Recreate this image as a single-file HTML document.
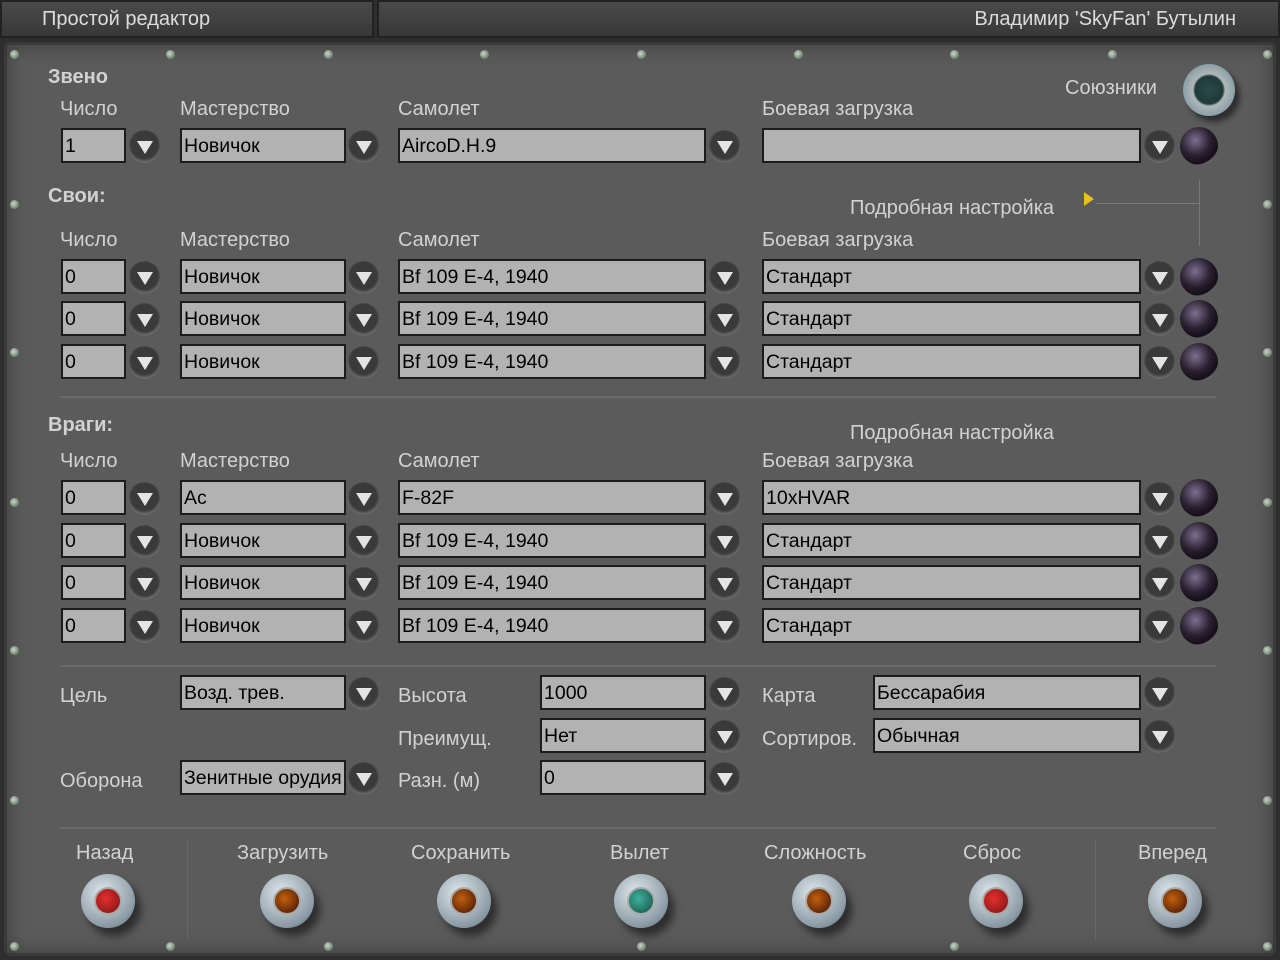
<!DOCTYPE html>
<html><head><meta charset="utf-8"><style>
*{margin:0;padding:0;box-sizing:border-box}
body{width:1280px;height:960px;overflow:hidden;background:#2e2e2e;font-family:"Liberation Sans",sans-serif;position:relative}
.a{position:absolute}
.top{position:absolute;top:0;height:38px;background:linear-gradient(#4a4a4a,#383838);border:2px solid #222;color:#ddd;font-size:20px;line-height:34px}
.panel{position:absolute;left:4px;top:42px;width:1272px;height:914px;background:#5b5b5b;border:3px solid #3a3a3a;border-radius:6px;box-shadow:inset 0 0 20px rgba(0,0,0,.35)}
.l{position:absolute;color:#d2d2d2;font-size:20px;white-space:nowrap}
.b{font-weight:bold}
.f{position:absolute;height:35px;background:#b2b2b2;border:2px solid #1c1c1c;color:#000;font-size:19.5px;line-height:32px;padding-left:2px;white-space:nowrap;overflow:hidden}
.d{position:absolute;width:33px;height:33px;border-radius:50%;background:radial-gradient(circle at 50% 45%,#3a3a3a 55%,#6a6a6a 70%,#2a2a2a 100%)}
.d:after{content:"";position:absolute;left:9px;top:11px;border-left:8px solid transparent;border-right:8px solid transparent;border-top:13px solid #e4e4e4}
.k{position:absolute;width:38px;height:38px;border-radius:50%;background:radial-gradient(circle at 40% 35%,#7a7090 0,#2a2030 45%,#140e18 70%,#9a90a0 78%,#4a4450 100%)}
.s{position:absolute;width:9px;height:9px;border-radius:50%;background:radial-gradient(circle at 40% 40%,#c8d8c8,#4a5a4a)}
.hr{position:absolute;height:2px;background:#666c70}
.btn{position:absolute;width:54px;height:54px;border-radius:50%;background:radial-gradient(circle at 40% 35%,#e0e8ec,#8a9aa4 70%,#50606a 100%);box-shadow:6px 8px 8px rgba(0,0,0,.5)}
.btn i{position:absolute;left:13px;top:13px;width:28px;height:28px;border-radius:50%;border:2px solid #aaa}
</style></head><body>
<div class="top" style="left:0;width:374px;padding-left:40px">Простой редактор</div>
<div class="top" style="left:377px;width:903px;text-align:right;padding-right:42px">Владимир 'SkyFan' Бутылин</div>
<div class="panel"></div>
<div class="s" style="left:10px;top:50px"></div><div class="s" style="left:166px;top:50px"></div><div class="s" style="left:324px;top:50px"></div><div class="s" style="left:480px;top:50px"></div><div class="s" style="left:637px;top:50px"></div><div class="s" style="left:794px;top:50px"></div><div class="s" style="left:950px;top:50px"></div><div class="s" style="left:1108px;top:50px"></div><div class="s" style="left:1263px;top:50px"></div>
<div class="s" style="left:10px;top:942px"></div><div class="s" style="left:166px;top:942px"></div><div class="s" style="left:324px;top:942px"></div><div class="s" style="left:637px;top:942px"></div><div class="s" style="left:950px;top:942px"></div><div class="s" style="left:1263px;top:942px"></div>
<div class="s" style="left:10px;top:200px"></div><div class="s" style="left:10px;top:348px"></div><div class="s" style="left:10px;top:498px"></div><div class="s" style="left:10px;top:646px"></div><div class="s" style="left:10px;top:796px"></div>
<div class="s" style="left:1263px;top:200px"></div><div class="s" style="left:1263px;top:348px"></div><div class="s" style="left:1263px;top:498px"></div><div class="s" style="left:1263px;top:646px"></div><div class="s" style="left:1263px;top:796px"></div>

<div class="l b" style="left:48px;top:66px">Звено</div>
<div class="l" style="left:1065px;top:77px">Союзники</div>
<div class="a" style="left:1183px;top:64px;width:52px;height:52px;border-radius:50%;background:radial-gradient(circle at 50% 50%,#2a4a48 0,#1e3a3a 38%,#b0b8b8 44%,#8aa0a8 70%,#3a4a50 100%);box-shadow:5px 6px 6px rgba(0,0,0,.5)"></div>
<div class="l" style="left:60px;top:98px">Число</div><div class="l" style="left:180px;top:98px">Мастерство</div><div class="l" style="left:398px;top:98px">Самолет</div><div class="l" style="left:762px;top:98px">Боевая загрузка</div>
<div class="f" style="left:61px;top:128px;width:65px">1</div><div class="d" style="left:128px;top:130px"></div>
<div class="f" style="left:180px;top:128px;width:166px">Новичок</div><div class="d" style="left:347px;top:130px"></div>
<div class="f" style="left:398px;top:128px;width:308px">AircoD.H.9</div><div class="d" style="left:708px;top:130px"></div>
<div class="f" style="left:762px;top:128px;width:379px"></div><div class="d" style="left:1143px;top:130px"></div><div class="k" style="left:1180px;top:127px"></div>

<div class="l b" style="left:48px;top:185px">Свои:</div>
<div class="l" style="left:850px;top:197px">Подробная настройка</div>
<div class="a" style="left:1084px;top:192px;border-left:10px solid #e8c020;border-top:7px solid transparent;border-bottom:7px solid transparent"></div>
<div class="a" style="left:1096px;top:203px;width:104px;height:1px;background:#777"></div><div class="a" style="left:1199px;top:180px;width:1px;height:66px;background:#777"></div>
<div class="l" style="left:60px;top:229px">Число</div><div class="l" style="left:180px;top:229px">Мастерство</div><div class="l" style="left:398px;top:229px">Самолет</div><div class="l" style="left:762px;top:229px">Боевая загрузка</div>

<div class="f" style="left:61px;top:259px;width:65px">0</div><div class="d" style="left:128px;top:261px"></div><div class="f" style="left:180px;top:259px;width:166px">Новичок</div><div class="d" style="left:347px;top:261px"></div><div class="f" style="left:398px;top:259px;width:308px">Bf 109 E-4, 1940</div><div class="d" style="left:708px;top:261px"></div><div class="f" style="left:762px;top:259px;width:379px">Стандарт</div><div class="d" style="left:1143px;top:261px"></div><div class="k" style="left:1180px;top:258px"></div>
<div class="f" style="left:61px;top:301px;width:65px">0</div><div class="d" style="left:128px;top:303px"></div><div class="f" style="left:180px;top:301px;width:166px">Новичок</div><div class="d" style="left:347px;top:303px"></div><div class="f" style="left:398px;top:301px;width:308px">Bf 109 E-4, 1940</div><div class="d" style="left:708px;top:303px"></div><div class="f" style="left:762px;top:301px;width:379px">Стандарт</div><div class="d" style="left:1143px;top:303px"></div><div class="k" style="left:1180px;top:300px"></div>
<div class="f" style="left:61px;top:344px;width:65px">0</div><div class="d" style="left:128px;top:346px"></div><div class="f" style="left:180px;top:344px;width:166px">Новичок</div><div class="d" style="left:347px;top:346px"></div><div class="f" style="left:398px;top:344px;width:308px">Bf 109 E-4, 1940</div><div class="d" style="left:708px;top:346px"></div><div class="f" style="left:762px;top:344px;width:379px">Стандарт</div><div class="d" style="left:1143px;top:346px"></div><div class="k" style="left:1180px;top:343px"></div>

<div class="hr" style="left:60px;top:396px;width:1156px"></div>
<div class="l b" style="left:48px;top:414px">Враги:</div>
<div class="l" style="left:850px;top:422px">Подробная настройка</div>
<div class="l" style="left:60px;top:450px">Число</div><div class="l" style="left:180px;top:450px">Мастерство</div><div class="l" style="left:398px;top:450px">Самолет</div><div class="l" style="left:762px;top:450px">Боевая загрузка</div>

<div class="f" style="left:61px;top:480px;width:65px">0</div><div class="d" style="left:128px;top:482px"></div><div class="f" style="left:180px;top:480px;width:166px">Ас</div><div class="d" style="left:347px;top:482px"></div><div class="f" style="left:398px;top:480px;width:308px">F-82F</div><div class="d" style="left:708px;top:482px"></div><div class="f" style="left:762px;top:480px;width:379px">10xHVAR</div><div class="d" style="left:1143px;top:482px"></div><div class="k" style="left:1180px;top:479px"></div>
<div class="f" style="left:61px;top:523px;width:65px">0</div><div class="d" style="left:128px;top:525px"></div><div class="f" style="left:180px;top:523px;width:166px">Новичок</div><div class="d" style="left:347px;top:525px"></div><div class="f" style="left:398px;top:523px;width:308px">Bf 109 E-4, 1940</div><div class="d" style="left:708px;top:525px"></div><div class="f" style="left:762px;top:523px;width:379px">Стандарт</div><div class="d" style="left:1143px;top:525px"></div><div class="k" style="left:1180px;top:522px"></div>
<div class="f" style="left:61px;top:565px;width:65px">0</div><div class="d" style="left:128px;top:567px"></div><div class="f" style="left:180px;top:565px;width:166px">Новичок</div><div class="d" style="left:347px;top:567px"></div><div class="f" style="left:398px;top:565px;width:308px">Bf 109 E-4, 1940</div><div class="d" style="left:708px;top:567px"></div><div class="f" style="left:762px;top:565px;width:379px">Стандарт</div><div class="d" style="left:1143px;top:567px"></div><div class="k" style="left:1180px;top:564px"></div>
<div class="f" style="left:61px;top:608px;width:65px">0</div><div class="d" style="left:128px;top:610px"></div><div class="f" style="left:180px;top:608px;width:166px">Новичок</div><div class="d" style="left:347px;top:610px"></div><div class="f" style="left:398px;top:608px;width:308px">Bf 109 E-4, 1940</div><div class="d" style="left:708px;top:610px"></div><div class="f" style="left:762px;top:608px;width:379px">Стандарт</div><div class="d" style="left:1143px;top:610px"></div><div class="k" style="left:1180px;top:607px"></div>

<div class="hr" style="left:60px;top:665px;width:1156px"></div>
<div class="l" style="left:60px;top:685px">Цель</div><div class="f" style="left:180px;top:675px;width:166px">Возд. трев.</div><div class="d" style="left:347px;top:677px"></div>
<div class="l" style="left:60px;top:770px">Оборона</div><div class="f" style="left:180px;top:760px;width:166px">Зенитные орудия</div><div class="d" style="left:347px;top:762px"></div>
<div class="l" style="left:398px;top:685px">Высота</div><div class="f" style="left:540px;top:675px;width:166px">1000</div><div class="d" style="left:708px;top:677px"></div>
<div class="l" style="left:398px;top:728px">Преимущ.</div><div class="f" style="left:540px;top:718px;width:166px">Нет</div><div class="d" style="left:708px;top:720px"></div>
<div class="l" style="left:398px;top:770px">Разн. (м)</div><div class="f" style="left:540px;top:760px;width:166px">0</div><div class="d" style="left:708px;top:762px"></div>
<div class="l" style="left:762px;top:685px">Карта</div><div class="f" style="left:873px;top:675px;width:268px">Бессарабия</div><div class="d" style="left:1143px;top:677px"></div>
<div class="l" style="left:762px;top:728px">Сортиров.</div><div class="f" style="left:873px;top:718px;width:268px">Обычная</div><div class="d" style="left:1143px;top:720px"></div>

<div class="hr" style="left:60px;top:827px;width:1156px"></div>
<div class="a" style="left:187px;top:840px;width:1px;height:100px;background:#666"></div><div class="a" style="left:1095px;top:840px;width:1px;height:100px;background:#666"></div>
<div class="l" style="left:76px;top:842px">Назад</div><div class="btn" style="left:81px;top:874px"><i style="background:radial-gradient(circle at 40% 40%,#e03030,#801010)"></i></div>
<div class="l" style="left:237px;top:842px">Загрузить</div><div class="btn" style="left:260px;top:874px"><i style="background:radial-gradient(circle at 40% 40%,#c06010,#401000)"></i></div>
<div class="l" style="left:411px;top:842px">Сохранить</div><div class="btn" style="left:437px;top:874px"><i style="background:radial-gradient(circle at 40% 40%,#c06010,#401000)"></i></div>
<div class="l" style="left:610px;top:842px">Вылет</div><div class="btn" style="left:614px;top:874px"><i style="background:radial-gradient(circle at 40% 40%,#40b0a0,#105040)"></i></div>
<div class="l" style="left:764px;top:842px">Сложность</div><div class="btn" style="left:792px;top:874px"><i style="background:radial-gradient(circle at 40% 40%,#c06010,#401000)"></i></div>
<div class="l" style="left:963px;top:842px">Сброс</div><div class="btn" style="left:969px;top:874px"><i style="background:radial-gradient(circle at 40% 40%,#e03030,#801010)"></i></div>
<div class="l" style="left:1138px;top:842px">Вперед</div><div class="btn" style="left:1148px;top:874px"><i style="background:radial-gradient(circle at 40% 40%,#c06010,#401000)"></i></div>
</body></html>
